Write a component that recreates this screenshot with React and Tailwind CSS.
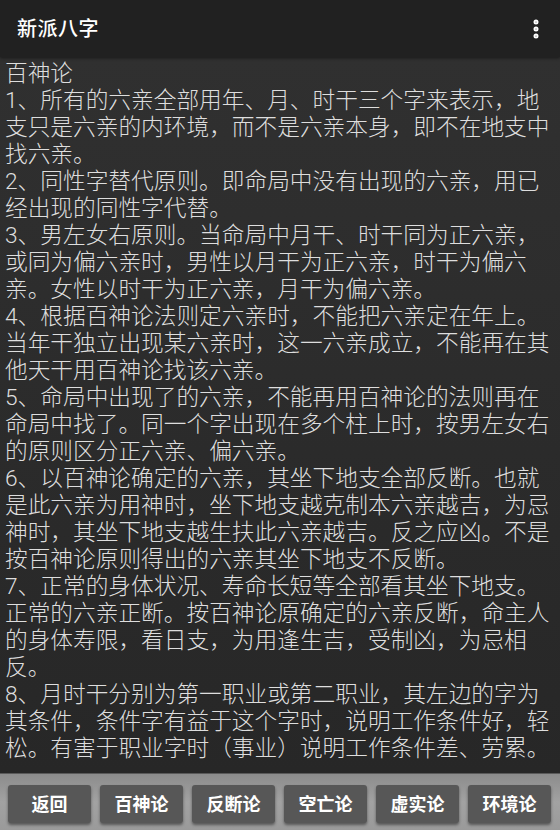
import { EllipsisVertical } from 'lucide-react'

const paragraphs = [
  ['百神论'],
  [
    '1、所有的六亲全部用年、月、时干三个字来表示，地',
    '支只是六亲的内环境，而不是六亲本身，即不在地支中',
    '找六亲。',
  ],
  ['2、同性字替代原则。即命局中没有出现的六亲，用已', '经出现的同性字代替。'],
  [
    '3、男左女右原则。当命局中月干、时干同为正六亲，',
    '或同为偏六亲时，男性以月干为正六亲，时干为偏六',
    '亲。女性以时干为正六亲，月干为偏六亲。',
  ],
  [
    '4、根据百神论法则定六亲时，不能把六亲定在年上。',
    '当年干独立出现某六亲时，这一六亲成立，不能再在其',
    '他天干用百神论找该六亲。',
  ],
  [
    '5、命局中出现了的六亲，不能再用百神论的法则再在',
    '命局中找了。同一个字出现在多个柱上时，按男左女右',
    '的原则区分正六亲、偏六亲。',
  ],
  [
    '6、以百神论确定的六亲，其坐下地支全部反断。也就',
    '是此六亲为用神时，坐下地支越克制本六亲越吉，为忌',
    '神时，其坐下地支越生扶此六亲越吉。反之应凶。不是',
    '按百神论原则得出的六亲其坐下地支不反断。',
  ],
  [
    '7、正常的身体状况、寿命长短等全部看其坐下地支。',
    '正常的六亲正断。按百神论原确定的六亲反断，命主人',
    '的身体寿限，看日支，为用逢生吉，受制凶，为忌相',
    '反。',
  ],
  [
    '8、月时干分别为第一职业或第二职业，其左边的字为',
    '其条件，条件字有益于这个字时，说明工作条件好，轻',
    '松。有害于职业字时（事业）说明工作条件差、劳累。',
  ],
]

const tabs = ['返回', '百神论', '反断论', '空亡论', '虚实论', '环境论']

const App = () => {
  return (
    <div
      className="w-[560px] h-[830px] flex flex-col overflow-hidden"
      style={{ fontFamily: 'Roboto, "Noto Sans CJK SC", sans-serif' }}
    >
      {/* Action bar */}
      <header className="h-[57px] shrink-0 bg-[#212121] flex items-center justify-between pl-[17px] pr-[12px] shadow-[0_1px_3px_rgba(0,0,0,0.5)] z-10">
        <h1 className="text-white text-[20px] font-medium tracking-[0.5px]">新派八字</h1>
        <EllipsisVertical className="text-white" size={24} strokeWidth={3} />
      </header>

      {/* Body text */}
      <main className="flex-1 bg-gradient-to-b from-[#303030] to-[#272727] pl-[5px] pt-[3px] text-[#dedede] text-[22.7px] leading-[27px] font-light whitespace-nowrap">
        {paragraphs.map((lines, i) => (
          <p key={i}>
            {lines.map((line, j) => (
              <span key={j} className="block">
                {line}
              </span>
            ))}
          </p>
        ))}
      </main>

      {/* Bottom tabs */}
      <nav className="h-[57px] shrink-0 bg-gradient-to-b from-[#8c8c8c] via-[#a2a2a2] to-[#9a9a9a] border-t border-[#5a5a5a] flex gap-[9px] px-[8px] pt-[11px] pb-[7px]">
        {tabs.map((t) => (
          <button
            key={t}
            className="w-[83px] h-[38px] rounded-[3px] bg-[#575757] text-white text-[18px] font-bold shadow-[0_2px_3px_rgba(0,0,0,0.45)]"
          >
            {t}
          </button>
        ))}
      </nav>
    </div>
  )
}

export default App
